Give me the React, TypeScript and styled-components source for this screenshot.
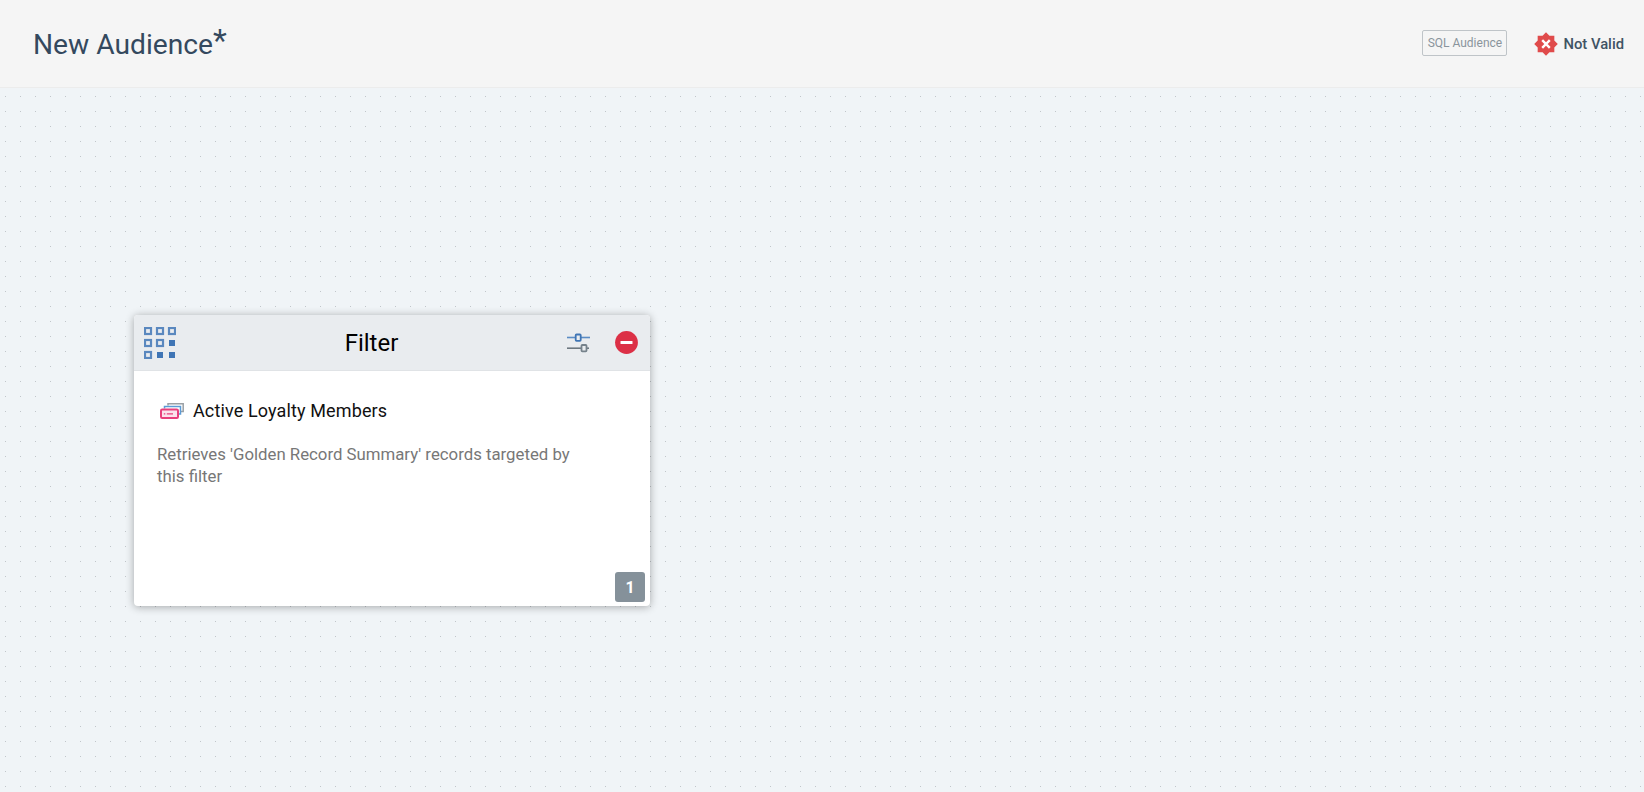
import styled, { createGlobalStyle } from 'styled-components';

const GlobalStyle = createGlobalStyle`
  html, body {
    margin: 0;
    padding: 0;
    height: 100%;
    overflow: hidden;
  }
  body {
    font-family: Roboto, "Liberation Sans", sans-serif;
  }
`;

const Page = styled.div`
  width: 100vw;
  height: 100vh;
  display: flex;
  flex-direction: column;
`;

const TopBar = styled.header`
  height: 87px;
  flex: none;
  display: flex;
  align-items: center;
  justify-content: space-between;
  padding: 0 20px 0 33px;
  background-color: #f5f5f5;
  border-bottom: solid 1px #ececec;
`;

const Title = styled.h1`
  margin: 2px 0 0;
  font-size: 28.2px;
  font-weight: 400;
  color: #34495e;

  sup {
    font-size: 32px;
    line-height: 0;
    position: relative;
    top: 7px;
    vertical-align: super;
  }
`;

const TopActions = styled.div`
  display: flex;
  align-items: center;
  gap: 27px;
  margin-bottom: 1px;
`;

const SqlButton = styled.button`
  width: 85px;
  height: 26px;
  padding: 0;
  border: solid 1px #bfc4c8;
  border-radius: 2px;
  background: transparent;
  font-family: inherit;
  font-size: 12px;
  color: #8a949c;
`;

const Status = styled.div`
  display: flex;
  align-items: center;
  gap: 5px;
  font-size: 14.8px;
  font-weight: 500;
  color: #3f5364;
  padding-top: 1px;
`;

const Canvas = styled.main`
  flex: 1;
  position: relative;
  background-color: #f0f4f7;
  background-image: radial-gradient(circle at 0.5px 0.5px, #c1c6ca 0.7px, transparent 0.7px);
  background-size: 15px 15px;
  background-position: 5px 8px;
`;

const Node = styled.section`
  position: absolute;
  left: 134px;
  top: 227px;
  width: 516px;
  height: 291px;
  display: flex;
  flex-direction: column;
  background-color: #fff;
  border-radius: 4px;
  box-shadow: 0 1px 8px rgba(0, 0, 0, 0.32);
`;

const NodeHeader = styled.div`
  height: 55px;
  flex: none;
  display: flex;
  align-items: center;
  padding: 0 12px 0 10px;
  background-color: #e9ecef;
  border-bottom: solid 1px #e0e3e6;
  border-radius: 4px 4px 0 0;
`;

const NodeTitle = styled.div`
  flex: 1;
  text-align: center;
  font-size: 24px;
  font-weight: 400;
  color: #000;
`;

const HeaderIcons = styled.div`
  display: flex;
  align-items: center;
  gap: 25px;
`;

const NodeBody = styled.div`
  flex: 1;
  position: relative;
  padding: 29px 24px 0 23px;
`;

const SourceRow = styled.div`
  display: flex;
  align-items: center;
  gap: 9px;
  padding-left: 3px;
  font-size: 18px;
  letter-spacing: 0.13px;
  color: #111;
`;

const Description = styled.p`
  margin: 22px 0 0;
  width: 430px;
  font-size: 16.8px;
  line-height: 22px;
  color: #777;
`;

const CountBadge = styled.div`
  position: absolute;
  right: 5px;
  bottom: 4px;
  width: 30px;
  height: 30px;
  display: flex;
  align-items: center;
  justify-content: center;
  border-radius: 3px;
  background-color: #85919a;
  color: #fff;
  font-size: 16px;
  font-weight: 700;
`;

const GridIcon = () => {
  const filled = ['1-2', '2-1', '2-2'];
  const cells: JSX.Element[] = [];
  for (let r = 0; r < 3; r++) {
    for (let c = 0; c < 3; c++) {
      const x = c * 12;
      const y = r * 12;
      cells.push(
        filled.includes(`${r}-${c}`) ? (
          <rect key={`${r}${c}`} x={x + 1} y={y + 1} width="6" height="6" fill="#3f75b5" />
        ) : (
          <rect key={`${r}${c}`} x={x + 1} y={y + 1} width="6" height="6" fill="none" stroke="#5a88bf" strokeWidth="2.2" />
        ),
      );
    }
  }
  return (
    <svg width="32" height="32" viewBox="0 0 32 32">
      {cells}
    </svg>
  );
};

const SlidersIcon = () => (
  <svg width="23" height="20" viewBox="0 0 23 20">
    <path d="M0 4.5H23" stroke="#5b8cc4" strokeWidth="1.6" fill="none" />
    <rect x="8.7" y="1.5" width="5" height="6.4" rx="0.8" fill="#e9ecef" stroke="#3f75b5" strokeWidth="1.8" />
    <path d="M0 15.2H22" stroke="#6d7880" strokeWidth="1.6" fill="none" />
    <rect x="14.5" y="12" width="5" height="6.4" rx="0.8" fill="#e9ecef" stroke="#76828b" strokeWidth="1.8" />
  </svg>
);

const RemoveIcon = () => (
  <svg width="23" height="23" viewBox="0 0 23 23">
    <circle cx="11.5" cy="11.5" r="11.4" fill="#dc3046" />
    <rect x="5.5" y="9.9" width="12" height="3.2" rx="0.5" fill="#fff" />
  </svg>
);

const CardsIcon = () => (
  <svg width="24" height="16" viewBox="0 0 24 16">
    <path d="M8 2.5V0.8H23.2V8.5H21" fill="none" stroke="#9aa0a5" strokeWidth="1.5" />
    <path d="M4.5 5.5V3.5H20.5V11H18.5" fill="none" stroke="#5b9bd5" strokeWidth="1.5" />
    <rect x="1" y="6.5" width="17" height="8.5" rx="1.2" fill="#fbe3ec" stroke="#e8407c" strokeWidth="2" />
    <path d="M3.8 10.8H5.3M6.8 10.8H13" stroke="#e8407c" strokeWidth="1.3" />
  </svg>
);

// eight pointed seal, built from alternating outer and inner radii
const sealPoints = Array.from({ length: 16 }, (_, i) => {
  const angle = (i * Math.PI) / 8 - Math.PI / 2;
  const radius = i % 2 === 0 ? 11.8 : 9;
  return `${(12 + radius * Math.cos(angle)).toFixed(2)},${(12 + radius * Math.sin(angle)).toFixed(2)}`;
}).join(' ');

const InvalidIcon = () => (
  <svg width="24" height="24" viewBox="0 0 24 24">
    <polygon points={sealPoints} fill="#e04b4b" />
    <path d="M8.2 8.2L15.8 15.8M15.8 8.2L8.2 15.8" stroke="#fff" strokeWidth="2.4" />
  </svg>
);

const App = () => {
  return (
    <Page>
      <GlobalStyle />
      <TopBar>
        <Title>
          New Audience<sup>*</sup>
        </Title>
        <TopActions>
          <SqlButton>SQL Audience</SqlButton>
          <Status>
            <InvalidIcon />
            Not Valid
          </Status>
        </TopActions>
      </TopBar>
      <Canvas>
        <Node>
          <NodeHeader>
            <GridIcon />
            <NodeTitle>Filter</NodeTitle>
            <HeaderIcons>
              <SlidersIcon />
              <RemoveIcon />
            </HeaderIcons>
          </NodeHeader>
          <NodeBody>
            <SourceRow>
              <CardsIcon />
              Active Loyalty Members
            </SourceRow>
            <Description>Retrieves 'Golden Record Summary' records targeted by this filter</Description>
            <CountBadge>1</CountBadge>
          </NodeBody>
        </Node>
      </Canvas>
    </Page>
  );
};

export default App;
